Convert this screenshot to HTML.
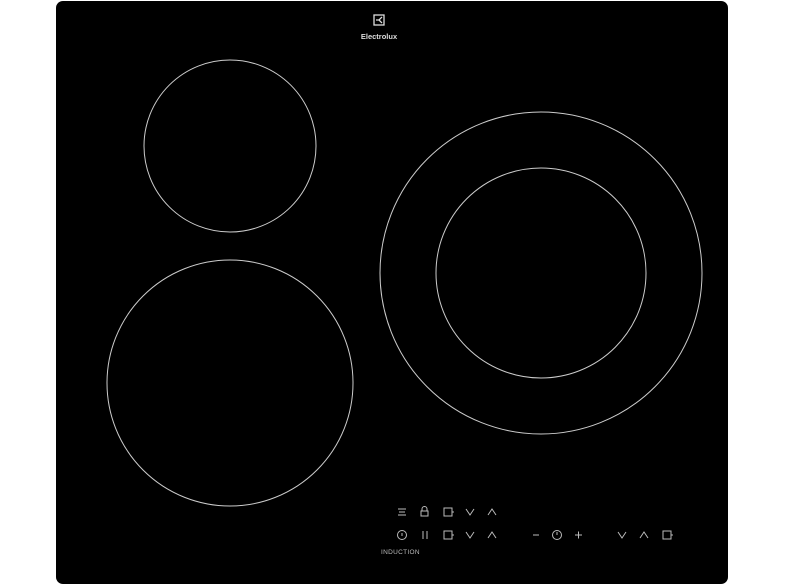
<!DOCTYPE html>
<html><head><style>
body{margin:0;background:#fff;width:786px;height:587px;overflow:hidden;position:relative;font-family:"Liberation Sans",sans-serif}
.p{position:absolute;left:56px;top:1px;width:672px;height:583px;background:#000;border-radius:7px}
</style></head><body>
<div class="p"></div>
<svg width="786" height="587" style="position:absolute;left:0;top:0" fill="none" stroke="#ccc" stroke-width="1">
<circle cx="230" cy="146" r="86"/>
<circle cx="230" cy="383" r="123"/>
<circle cx="541" cy="273" r="161"/>
<circle cx="541" cy="273" r="105"/>
<g stroke="#ddd" stroke-width="1.3">
<rect x="374" y="15" width="10" height="10"/>
<path d="M376 20h3l3-3M379 20l3 3"/>
</g>
<text x="379" y="39" fill="#ddd" stroke="none" font-size="7.5" font-weight="bold" text-anchor="middle">Electrolux</text>
<g stroke="#bbb" stroke-width="1">
<path d="M398 509h8M399 512h6M398 515h8"/>
<rect x="421" y="511" width="7" height="5"/><path d="M422 511v-2a2.5 2.5 0 0 1 5 0v2"/>
<rect x="444" y="508" width="8" height="8"/><path d="M452 512h2"/>
<path d="M466 509l4 6l4-6M488 515l4-6l4 6"/>
<circle cx="402" cy="535" r="4.5"/><path d="M402 533v3"/>
<path d="M423 531v8M427 531v8"/>
<rect x="444" y="531" width="8" height="8"/><path d="M452 535h2"/>
<path d="M466 532l4 6l4-6M488 538l4-6l4 6"/>
<path d="M533 535h6"/>
<circle cx="557" cy="535" r="4.5"/><path d="M557 532v3"/>
<path d="M575 535h7M578.5 531.5v7"/>
<path d="M618 532l4 6l4-6M640 538l4-6l4 6"/>
<rect x="663" y="531" width="8" height="8"/><path d="M671 535h2"/>
</g>
<text x="381" y="554" fill="#bbb" stroke="none" font-size="6.5" letter-spacing=".3">INDUCTION</text>
</svg>
</body></html>
